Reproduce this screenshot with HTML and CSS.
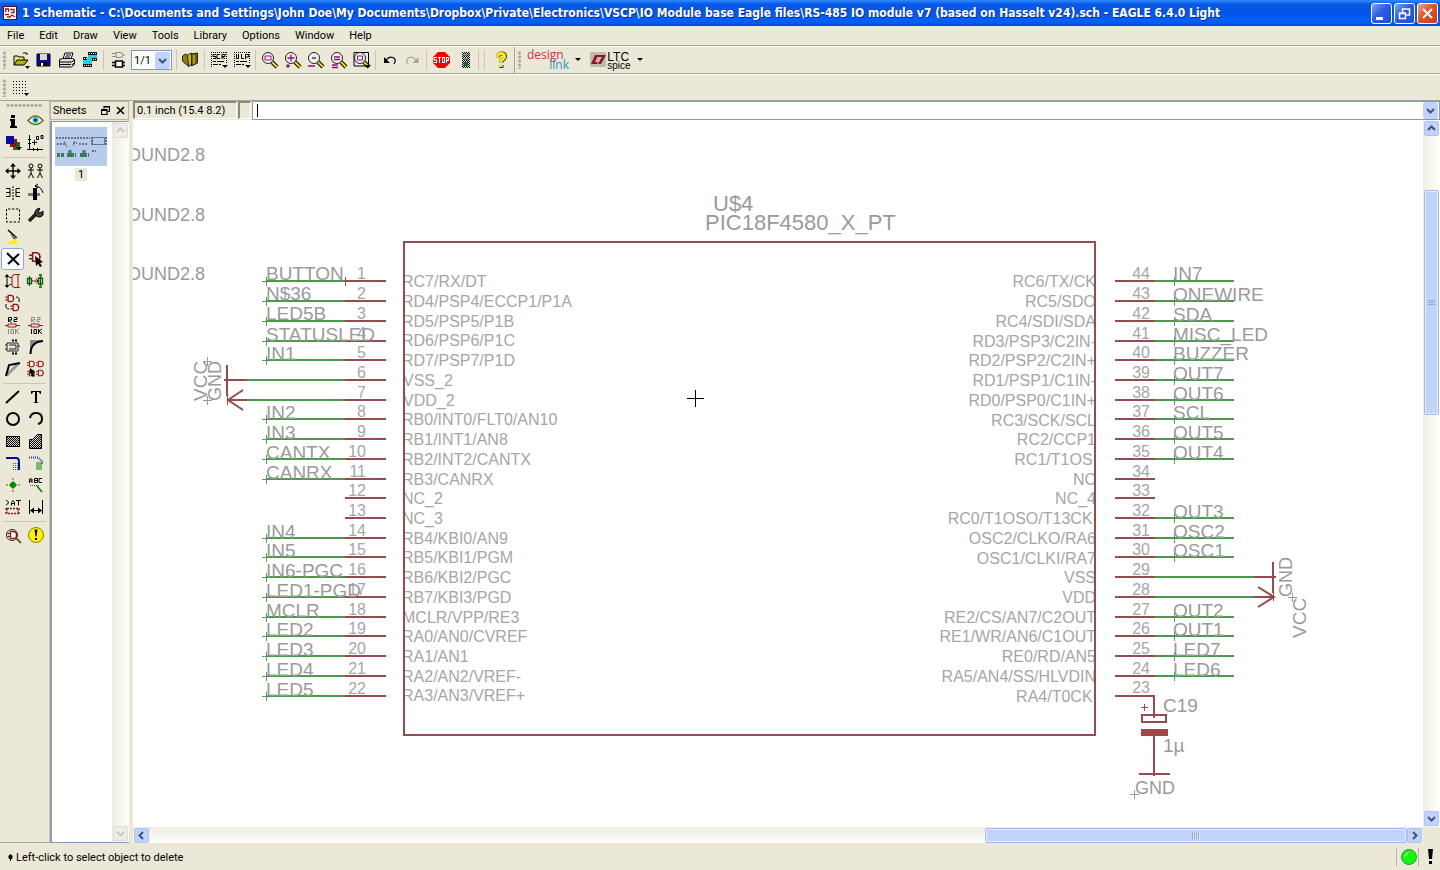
FILE: index.html
```html
<!DOCTYPE html>
<html lang="en">
<head>
<meta charset="utf-8">
<title>1 Schematic - EAGLE 6.4.0 Light</title>
<link rel="stylesheet" href="styles.css">
</head>
<body>
<svg class="defs" width="0" height="0" aria-hidden="true">
  <defs>
    <pattern id="dither" width="2" height="2" patternUnits="userSpaceOnUse"><rect width="2" height="2" fill="#d8d6c8"/><path d="M0 0h1v1h-1zM1 1h1v1h-1z" fill="#000"/></pattern>
    <pattern id="hazard" width="2" height="2" patternUnits="userSpaceOnUse"><rect width="2" height="2" fill="#fff"/><path d="M0 0h1v1h-1zM1 1h1v1h-1z" fill="#e6d800"/></pattern>
    <pattern id="greendots" width="2" height="2" patternUnits="userSpaceOnUse"><path d="M0 0h1v1h-1z" fill="#0a8a0a"/></pattern>
    <symbol id="lens" viewBox="0 0 20 20"><path d="M12 12l5 5" stroke="#000" stroke-width="4"/><path d="M12 12l5 5" stroke="#f2e200" stroke-width="2"/><circle cx="8" cy="8" r="5.5" fill="#f6f2ee" stroke="#222" stroke-width="1"/></symbol>
    <symbol id="gate" viewBox="0 0 10 10"><path d="M3 1.500h3q3 0 3 3.500t-3 3.500h-3zM0 3.500h3M0 6.500h3M9 5h1" fill="none" stroke="#8c1a1a" stroke-width="1.300"/></symbol>
    <symbol id="man" viewBox="0 0 8 16"><circle cx="4" cy="3" r="2" fill="none" stroke="#000"/><path d="M4 5v5M1 7h6M4 10l-2.500 5M4 10l2.500 5" stroke="#000" fill="none"/></symbol>
  </defs>
</svg>
<div class="window">
  <header class="titlebar">
    <svg class="app-icon" width="14" height="14" viewBox="0 0 14 14"><rect x=".5" y=".5" width="13" height="13" fill="#fff" stroke="#5a0c0c"/><path d="M2.500 6v-3h3v3M7 3.500h4v3h-3M2 8.500h4M4 11h3l2-2 3 2" fill="none" stroke="#a01818" stroke-width="1.300"/></svg>
    <h1 class="caption">1 Schematic - C:\Documents and Settings\John Doe\My Documents\Dropbox\Private\Electronics\VSCP\IO Module base Eagle files\RS-485 IO module v7 (based on Hasselt v24).sch - EAGLE 6.4.0 Light</h1>
    <div class="window-buttons">
      <button class="wb" aria-label="Minimize"><svg width="19" height="19"><path d="M4 13h7v3h-7z" fill="#fff"/></svg></button>
      <button class="wb" aria-label="Restore"><svg width="19" height="19"><path d="M7.500 8v-3h7v6h-3M7 5h8" fill="none" stroke="#fff" stroke-width="1.500"/><path d="M4.500 9.500h6v5h-6zM4 9h7" fill="none" stroke="#fff" stroke-width="1.500"/></svg></button>
      <button class="wb close" aria-label="Close"><svg width="19" height="19"><path d="M5 5l9 9M14 5l-9 9" stroke="#fff" stroke-width="2"/></svg></button>
    </div>
  </header>

  <nav class="menubar">
    <button>File</button><button>Edit</button><button>Draw</button><button>View</button><button>Tools</button><button>Library</button><button>Options</button><button>Window</button><button>Help</button>
  </nav>

  <div class="toolbar">
    <span class="grip"></span>
    <button class="tb" aria-label="Open"><svg width="20" height="20"><path d="M3 15v-9h4l1 1h5v3" fill="url(#hazard)" stroke="#000"/><path d="M3 15l3-5h11l-4 5z" fill="#b8ae10" stroke="#000"/><path d="M12 3h4v2" fill="none" stroke="#000"/><path d="M14 16h5l-2.500 3z"/></svg></button>
    <button class="tb" aria-label="Save"><svg width="20" height="20"><path d="M3 4h13v12h-13z" fill="#0a0a96" stroke="#000"/><path d="M6 4h7v6h-7z" fill="#d8d8d8"/><path d="M6 12h7v4h-7z" fill="#000"/><path d="M7 13h2v3h-2z" fill="#fff"/></svg></button>
    <button class="tb" aria-label="Print"><svg width="20" height="20"><path d="M6 9l2-6h8l-2 6" fill="#fff" stroke="#000"/><path d="M9 5h5M8 7h5" stroke="#000"/><path d="M2.500 9.500l3-1h10l2 1v5l-3 2.500h-12z" fill="#ddd" stroke="#000"/><path d="M3 12h12M3 14.500h11M15 12l2-2M15 15l2-2" stroke="#000"/><path d="M10 13h2v1h-2z" fill="#e0d000"/></svg></button>
    <button class="tb" aria-label="Board"><svg width="20" height="20"><path d="M8 4h9v5h-9zM3 8h9v7h-9z" fill="#19d6e0"/><path d="M8 2h9v3h-9zM12 8h5v3h-5zM3 7h4v3h-4zM3 14h9v3h-9z" fill="#111"/><path d="M9 3.500h8M13 9.500h4M4 8.500h3M4 15.500h8" stroke="#fff" stroke-dasharray="1 1"/></svg></button>
    <span class="sep"></span>
    <button class="tb" aria-label="Gate"><svg width="20" height="20"><path d="M8 2.500h4q3 0 3 2.500t-3 2.500h-4zM4 3.500h4M4 6.500h4M15 5h2" fill="none" stroke="#8a8a80"/><path d="M7.500 11h7v6h-7zM4 12.500h3M4 15.500h3M15 12.500h2M15 15.500h2" fill="#fff" stroke="#000" stroke-width="1.500"/></svg></button>
    <label class="sheet-select"><select aria-label="Sheet"><option>1/1</option></select><svg class="drop" width="15" height="17"><path d="M4 7l3.500 3.500 3.500-3.500" fill="none" stroke="#3d567d" stroke-width="2"/></svg></label>
    <span class="sep"></span>
    <button class="tb" aria-label="Library"><svg width="20" height="20"><path d="M1.500 6l3-2 3 2v10l-3-2-3-3z" fill="#8a8200" stroke="#222"/><path d="M6.500 5l4-2v11l-3 3z" fill="#c9c015" stroke="#222"/><path d="M10.500 4l6-1v10l-6 3z" fill="#6b6500" stroke="#222"/><path d="M13 5v9" stroke="#ddd24a"/></svg></button>
    <span class="sep"></span>
    <button class="tb" aria-label="Script"><svg width="20" height="20"><path d="M2 2.500h16M2.500 2v15M17.500 2v12" stroke="#000" stroke-dasharray="1 1"/><path d="M7 4.500h-3v2h3v2h-3M11 4.500h-3v4h3M13 9v-4.500h3v2h-3l3 2.500" fill="none" stroke="#000"/><path d="M4 11.500h3M8 11.500h7M4 14.500h5M10 14.500h2" stroke="#000"/><path d="M13 15h6l-3 3z"/></svg></button>
    <button class="tb" aria-label="User language program"><svg width="20" height="20"><path d="M2 2.500h16M2.500 2v15M17.500 2v12" stroke="#000" stroke-dasharray="1 1"/><path d="M4.500 4v4.500h2v-4.500M9.500 4v4.500h2.500M13.500 9v-4.500h3v2.500h-3" fill="none" stroke="#000"/><path d="M4 11.500h3M8 11.500h7M4 14.500h5M10 14.500h2" stroke="#000"/><path d="M13 15h6l-3 3z"/></svg></button>
    <span class="sep"></span>
    <button class="tb" aria-label="Zoom to fit"><svg width="20" height="20"><use href="#lens"/><path d="M5 6h6v4h-6z" fill="none" stroke="#93107a"/></svg></button>
    <button class="tb" aria-label="Zoom in"><svg width="20" height="20"><use href="#lens"/><path d="M4.500 8h7M8 4.500v7M3 16h4M5 14v4" stroke="#93107a" stroke-width="1.300"/></svg></button>
    <button class="tb" aria-label="Zoom out"><svg width="20" height="20"><use href="#lens"/><path d="M6 8h4M2 16h7" stroke="#93107a" stroke-width="1.300"/></svg></button>
    <button class="tb" aria-label="Redraw"><svg width="20" height="20"><use href="#lens"/><path d="M5 7h6M5 9.500h6M3 15h6M3 17.500h6" stroke="#93107a" stroke-width="1.300"/></svg></button>
    <button class="tb" aria-label="Select area"><svg width="20" height="20"><path d="M2 2.500h14.500v13.500h-14.500z" fill="#eee" stroke="#000"/><use href="#lens"/><path d="M5.500 6h5v4h-5z" fill="none" stroke="#93107a"/><path d="M13 15h6l-3 3z"/></svg></button>
    <span class="sep"></span>
    <button class="tb" aria-label="Undo"><svg width="20" height="20"><path d="M6 10q3-4 7-2.500q4 2 1 6.500" fill="none" stroke="#000" stroke-width="1.200"/><path d="M4 7v6h6z"/></svg></button>
    <button class="tb" aria-label="Redo"><svg width="20" height="20"><path d="M13 10q-3-4-7-2.500q-4 2-1 6.500" fill="none" stroke="#a5a498" stroke-width="1.200"/><path d="M15.500 7v6h-6z" fill="#a5a498"/></svg></button>
    <span class="sep"></span>
    <button class="tb" aria-label="Stop"><svg width="20" height="20"><path d="M7 2h7l5 5v6l-5 5h-7l-5-5v-6z" fill="#f00000"/><path d="M6 7.500h-3v2.500h2.500v2.500h-3M7 7.500h3M8.500 7.500v5.500M11.500 7.500h2v5h-2zM15.500 13v-5.500h2v3h-2" fill="none" stroke="#fff" stroke-width="1.100"/></svg></button>
    <button class="tb" aria-label="Go"><svg width="20" height="20"><path d="M8 2h8v16h-8z" fill="url(#dither)"/><path d="M10 4h3v2h-3zM10 8h3v2h-3z" fill="#777"/><path d="M10 12h4v4h-4z" fill="#14691f"/></svg></button>
    <span class="sep double"></span>
    <button class="tb" aria-label="Help"><svg width="20" height="20"><path d="M7 7.500q0-4 3.500-4t3.500 3q0 2-3.500 4v2M10.500 15v3" fill="none" stroke="#333" stroke-width="4"/><path d="M6.500 7.500q0-4 3.500-4t3.500 3q0 2-3.500 4v2M10 15v2" fill="none" stroke="#ffee00" stroke-width="3"/></svg></button>
    <div class="extra">
      <span class="grip"></span>
      <button class="brand design" aria-label="design link"><span class="dl-a">design</span><span class="dl-b">link</span></button>
      <svg class="caret-down" width="6" height="4"><path d="M0 0h6l-3 3z"/></svg>
      <button class="brand ltc" aria-label="LTC spice"><svg width="16" height="15"><rect width="16" height="15" fill="#bdbab4"/><path d="M1 12l4-9h3l-3 7h3l-1 2zM8 3h8l-5 9h-3l4-7h-5z" fill="#9c1020"/></svg><span class="ltc-text"><b>LTC</b><i>spice</i></span></button>
      <svg class="caret-down" width="6" height="4"><path d="M0 0h6l-3 3z"/></svg>
    </div>
  </div>

  <div class="toolbar params">
    <span class="grip"></span>
    <button class="tb" aria-label="Grid"><svg width="20" height="20"><path d="M2 3.500h14M2 6.500h14M2 9.500h14M2 12.500h14M2 15.500h10" stroke="#000" stroke-dasharray="1 2"/><path d="M13 15h5l-2.500 3z"/></svg></button>
  </div>

  <main class="body">
    <aside class="palette">
      <span class="hgrip"></span>
      <div class="tools">
        <button aria-label="Info"><svg width="20" height="20"><path d="M8 4h4v3h-4zM7 8h5v7h2v2h-7v-2h1v-5h-1z"/></svg></button>
        <button aria-label="Show"><svg width="20" height="20"><path d="M2 9.500q7.500-9 15 0q-7.500 8-15 0z" fill="#fff" stroke="#6b6b10" stroke-width="1.500"/><circle cx="9.500" cy="9" r="3" fill="#18b9dc"/><circle cx="9.500" cy="9" r="1.200"/></svg></button>
        <button aria-label="Display"><svg width="20" height="20"><path d="M3 3h8v8h-8z" fill="#0b0b9c"/><path d="M11 6h3v8h-7v-3h4z" fill="#8c1420"/><path d="M14 9h3v8h-7v-3h4z" fill="#157a15"/><path d="M13 14h6l-3 3z"/></svg></button>
        <button aria-label="Mark"><svg width="20" height="20"><path d="M3.500 2v15M1 16.500h16M6 9.500h5M8.500 7v5" stroke="#000"/><path d="M2 6.500h3M2 10.500h3M7.500 15v3M11.500 15v3" stroke="#000"/><path d="M10.500 3.500h2v3h-2zM15 2.500h2v3h-2z" fill="none" stroke="#000"/></svg></button>
      </div>
      <hr>
      <div class="tools">
        <button aria-label="Move"><svg width="20" height="20"><path d="M10 4v12M4 10h12" stroke="#000" stroke-width="1.400"/><path d="M10 2l-3 3.500h6zM10 18l-3-3.500h6zM2 10l3.500-3v6zM18 10l-3.500-3v6z"/></svg></button>
        <button aria-label="Copy"><svg width="20" height="20"><use href="#man" x="1" y="2" width="8" height="16"/><use href="#man" x="10" y="2" width="8" height="16"/></svg></button>
        <button aria-label="Mirror"><svg width="20" height="20"><path d="M3 5.500h4v8h-4M7 9.500h-4M17 5.500h-4v8h4M13 9.500h4" fill="none" stroke="#000"/><path d="M10 3v14" stroke="#000" stroke-dasharray="2 1"/></svg></button>
        <button aria-label="Rotate"><svg width="20" height="20"><path d="M2 10h12v3h-12z" fill="#777"/><path d="M7 5h4v12h-4z"/><path d="M9 3q6 0 8 7M9 3l3-2M9 3l3 2" fill="none" stroke="#000"/></svg></button>
        <button aria-label="Group"><svg width="20" height="20"><path d="M3.500 4v13h13v-13z" fill="none" stroke="#000" stroke-dasharray="2.500 1.500"/></svg></button>
        <button aria-label="Change"><svg width="20" height="20"><path d="M3 16l7-7" stroke="#222" stroke-width="3.500"/><path d="M9 10q-1-5 4-7l1 1-2 3 2 1 3-2v4q-3 4-8 0z" fill="#444" stroke="#000"/></svg></button>
        <button aria-label="Paste"><svg width="20" height="20"><path d="M5 3l9 8" stroke="#000" stroke-width="1.500"/><path d="M8 7l3 5 3-1z" fill="#777" stroke="#555"/><path d="M14 11v6h-12z" fill="#fff000"/></svg></button>
        <span></span>
        <button class="active" aria-label="Delete"><svg width="20" height="20"><path d="M4 4l12 12M16 5l-11 10" stroke="#000" stroke-width="2"/></svg></button>
        <button aria-label="Add"><svg width="20" height="20"><use href="#gate" x="3" y="2" width="12" height="12"/><path d="M9 7l8 6-3 1 2 3-2 1-2-3-2 2z"/></svg></button>
        <button aria-label="Pinswap"><svg width="20" height="20"><path d="M4 5v10" stroke="#000"/><path d="M4 3l-2.500 3h5zM4 17l-2.500-3h5z"/><path d="M17 3.500h-5q-3 0-3 2.500v8q0 2.500 3 2.500h5M6 6.500h3M6 13.500h3M15 3v14" fill="none" stroke="#8c1a1a"/></svg></button>
        <button aria-label="Replace"><svg width="20" height="20"><path d="M3.500 5v10M1.500 7.500h4v5h-4zM14.500 3v14M12.500 7h4v6h-4z" fill="none" stroke="#08600c" stroke-width="1.300"/><path d="M6 10h6M10 7.500l2 2.500-2 2.500" fill="none" stroke="#6b1020"/><path d="M13 3h3v2h-3zM13 15h3v2h-3z" fill="#169020"/></svg></button>
        <button aria-label="Gateswap"><svg width="20" height="20"><use href="#gate" x="2" y="1" width="10" height="9"/><use href="#gate" x="7" y="10" width="10" height="9"/><path d="M13 4q4 0 3 5M6 16q-4 0-3-5" fill="none" stroke="#000"/></svg></button>
        <span></span>
        <button aria-label="Name"><svg width="20" height="20"><path d="M5.500 7v-4.500h3v2.500h-3l3 2.500M11 2.500h3v2h-3v2h3" fill="none" stroke="#000"/><path d="M2 10.500h3M5 9h8v3h-8zM13 10.500h4" fill="none" stroke="#a01818"/><path d="M5.500 14v5M8 14.500h2.500v4h-2.500zM12.500 14v5M16 14l-3 2 3 3" fill="none" stroke="#888"/></svg></button>
        <button aria-label="Value"><svg width="20" height="20"><path d="M5.500 7v-4.500h3v2.500h-3l3 2.500M11 2.500h3v2h-3v2h3" fill="none" stroke="#888"/><path d="M2 10.500h3M5 9h8v3h-8zM13 10.500h4" fill="none" stroke="#a01818"/><path d="M5.500 14v5M8 14.500h2.500v4h-2.500zM12.500 14v5M16 14l-3 2 3 3" fill="none" stroke="#000"/></svg></button>
        <button aria-label="Smash"><svg width="20" height="20"><path d="M4 6h11v8h-11zM6 8h7v4h-7M2 8h2M2 12h2M15 9h2" fill="none" stroke="#222"/><path d="M9 3.500h6M9 16.500h6" stroke="#000" stroke-width="2" stroke-dasharray="2 1"/></svg></button>
        <button aria-label="Miter"><svg width="20" height="20"><path d="M4 17v-14h13l-9 3-3 5z" fill="#888"/><path d="M4.500 17q0-12 12.500-13" fill="none" stroke="#000" stroke-width="2"/></svg></button>
        <button aria-label="Split"><svg width="20" height="20"><path d="M4 16l12-12" stroke="#999" stroke-width="3"/><path d="M3 17l3-11 11-2" fill="none" stroke="#000" stroke-width="2"/></svg></button>
        <button aria-label="Invoke"><svg width="20" height="20"><use href="#gate" x="1" y="1" width="8" height="8"/><use href="#gate" x="10" y="1" width="8" height="8"/><use href="#gate" x="1" y="10" width="8" height="8"/><use href="#gate" x="10" y="10" width="8" height="8"/><path d="M4 9l5 4-2 1 2 3-2 1-3-4z"/></svg></button>
      </div>
      <hr>
      <div class="tools">
        <button aria-label="Wire"><svg width="20" height="20"><path d="M3 16l13-12" stroke="#000" stroke-width="2"/></svg></button>
        <button aria-label="Text"><svg width="20" height="20"><path d="M5 4h10v3h-1l-1-2h-2v10l2 1h-6l2-1v-10h-2l-1 2h-1z"/></svg></button>
        <button aria-label="Circle"><svg width="20" height="20"><circle cx="10" cy="10" r="6" fill="none" stroke="#000" stroke-width="2"/></svg></button>
        <button aria-label="Arc"><svg width="20" height="20"><path d="M4 9q1-5 6-5q6 0 6 6q0 4-4 5" fill="none" stroke="#000" stroke-width="2"/></svg></button>
        <button aria-label="Rectangle"><svg width="20" height="20"><rect x="3.500" y="5.500" width="13" height="10" fill="url(#dither)" stroke="#000"/></svg></button>
        <button aria-label="Polygon"><svg width="20" height="20"><path d="M3.500 17.500v-9h3l5-5h4v14z" fill="url(#dither)" stroke="#000"/></svg></button>
        <button aria-label="Bus"><svg width="20" height="20"><path d="M3 5h10q3 0 3 4v8" fill="none" stroke="#0a0a96" stroke-width="2"/><path d="M9 9h6v8h-6z" fill="url(#greendots)"/></svg></button>
        <button aria-label="Net"><svg width="20" height="20"><path d="M3 4.500h9l4 4v3" fill="none" stroke="#3434a8" stroke-width="2" stroke-dasharray="1 1"/><path d="M10 10h6M10 12h6M10 14h6M10 16h6" stroke="#0a8a0a"/></svg></button>
        <button aria-label="Junction"><svg width="20" height="20"><path d="M10 3v14M3 10h14" stroke="#0a7a0a" stroke-dasharray="2 1"/><circle cx="10" cy="10" r="3" fill="#078a07"/></svg></button>
        <button aria-label="Label"><svg width="20" height="20"><path d="M3.500 8v-4h2.500v4M3.500 6h2.500M8.500 3.500h3v4h-3zM8 5.500h3M16 3.500h-3v4h3" fill="none" stroke="#000"/><path d="M4 10.500h9" stroke="#0a7a0a" stroke-dasharray="1 1"/><path d="M11 11l5 6" stroke="#0a7a0a" stroke-width="1.500"/></svg></button>
        <button aria-label="Attribute"><svg width="20" height="20"><path d="M3 3l3 2.500-3 2.500M8.500 8.500v-3l1.500-2 1.500 2v3M8.500 6.500h3M13 3.500h5M15.500 3.500v5" fill="none" stroke="#000"/><path d="M4 11.500h11v5h-11zM3 11v2M3 15v2M16 11v2M16 15v2" fill="none" stroke="#8c1a1a" stroke-width="1.300" stroke-dasharray="2 1"/></svg></button>
        <button aria-label="Dimension"><svg width="20" height="20"><path d="M3.500 3v14M16.500 3v14M4 13.500h12" stroke="#000"/><path d="M4 13.500l4-3v6zM16 13.500l-4-3v6z"/></svg></button>
      </div>
      <hr>
      <div class="tools">
        <button aria-label="ERC"><svg width="20" height="20"><path d="M13 13l5 5" stroke="#6a6420" stroke-width="2"/><circle cx="9" cy="10" r="5.500" fill="#fff" stroke="#222"/><use href="#gate" x="2" y="5" width="15" height="10"/></svg></button>
        <button aria-label="Errors"><svg width="20" height="20"><circle cx="10" cy="10" r="7.500" fill="#fff200" stroke="#8a8300"/><path d="M8.500 4.500h3l-1 7h-1zM9 13h2v2h-2z"/></svg></button>
      </div>
    </aside>

    <section class="dock">
      <header class="dock-title"><h2>Sheets</h2>
        <button aria-label="Float"><svg width="9" height="9"><path d="M3 2.500v-2h5.500v5h-2M3 1h6" fill="none" stroke="#000" stroke-width="1.200"/><path d="M.5 3.500h5.500v5h-5.500zM0 4.500h6" fill="none" stroke="#000" stroke-width="1.200"/></svg></button>
        <button aria-label="Close"><svg width="9" height="9"><path d="M1 1l7 7M8 1l-7 7" stroke="#000" stroke-width="1.600"/></svg></button>
      </header>
      <div class="dock-list">
        <figure class="sheet">
          <svg width="52" height="39"><rect width="52" height="39" fill="#b9cbea"/><path d="M1 11h34M2 17h9M18 16h4M24 17h8" stroke="#65758e" stroke-width="2" stroke-dasharray="2 1"/><path d="M9 14l3 6M20 14l-2 5" stroke="#65758e"/><path d="M37.500 10.500h12v7h-12z" fill="none" stroke="#65758e"/><path d="M37 10v8M51 10v9M37 24h4" stroke="#51765f" stroke-width="2" stroke-dasharray="2 1"/><path d="M2 28h7M12 28h9M25 28h9" stroke="#3d7a5a" stroke-width="4" stroke-dasharray="3 1"/><path d="M15 23v7M29 23v7" stroke="#3d7a5a" stroke-width="3"/></svg>
          <figcaption>1</figcaption>
        </figure>
        <div class="vscroll disabled">
          <button aria-label="Up"><svg width="9" height="9"><path d="M1 6l3.500-3.500 3.500 3.500" fill="none" stroke="#c8c7be" stroke-width="2"/></svg></button>
          <button aria-label="Down"><svg width="9" height="9"><path d="M1 3l3.500 3.500 3.500-3.500" fill="none" stroke="#c8c7be" stroke-width="2"/></svg></button>
        </div>
      </div>
    </section>

    <section class="editor">
      <div class="command-row">
        <output class="coords">0.1 inch (15.4 8.2)</output>
        <span class="slot"></span>
        <div class="command">
          <span class="text-caret"></span>
          <input type="text" aria-label="Command">
          <button aria-label="History"><svg width="9" height="9"><path d="M1 3l3.500 3.500 3.500-3.500" fill="none" stroke="#3d567d" stroke-width="2"/></svg></button>
        </div>
      </div>
      <div class="view">
        <svg class="sheet-canvas" role="img" aria-label="Schematic">
          <g transform="translate(-133 -120)">
            <g class="pin-name">
              <text x="402" y="287">RC7/RX/DT</text><text x="402" y="307">RD4/PSP4/ECCP1/P1A</text><text x="402" y="327">RD5/PSP5/P1B</text><text x="402" y="346">RD6/PSP6/P1C</text><text x="402" y="366">RD7/PSP7/P1D</text><text x="403" y="386">VSS_2</text><text x="403" y="406">VDD_2</text><text x="402" y="425">RB0/INT0/FLT0/AN10</text><text x="402" y="445">RB1/INT1/AN8</text><text x="402" y="465">RB2/INT2/CANTX</text><text x="402" y="485">RB3/CANRX</text><text x="402" y="504">NC_2</text><text x="402" y="524">NC_3</text><text x="402" y="544">RB4/KBI0/AN9</text><text x="402" y="563">RB5/KBI1/PGM</text><text x="402" y="583">RB6/KBI2/PGC</text><text x="402" y="603">RB7/KBI3/PGD</text><text x="402" y="623">MCLR/VPP/RE3</text><text x="402" y="642">RA0/AN0/CVREF</text><text x="402" y="662">RA1/AN1</text><text x="402" y="682">RA2/AN2/VREF-</text><text x="402" y="701">RA3/AN3/VREF+</text>
            </g>
            <g class="pin-name end">
              <text x="1096" y="287">RC6/TX/CK</text><text x="1096" y="307">RC5/SDO</text><text x="1096" y="327">RC4/SDI/SDA</text><text x="1096" y="347">RD3/PSP3/C2IN-</text><text x="1096" y="366">RD2/PSP2/C2IN+</text><text x="1096" y="386">RD1/PSP1/C1IN-</text><text x="1096" y="406">RD0/PSP0/C1IN+</text><text x="1096" y="426">RC3/SCK/SCL</text><text x="1096" y="445">RC2/CCP1</text><text x="1097" y="465">RC1/T1OSI</text><text x="1096" y="485">NC</text><text x="1096" y="504">NC_4</text><text x="1097" y="524">RC0/T1OSO/T13CKI</text><text x="1096" y="544">OSC2/CLKO/RA6</text><text x="1096" y="564">OSC1/CLKI/RA7</text><text x="1096" y="583">VSS</text><text x="1096" y="603">VDD</text><text x="1096" y="623">RE2/CS/AN7/C2OUT</text><text x="1096" y="642">RE1/WR/AN6/C1OUT</text><text x="1096" y="662">RE0/RD/AN5</text><text x="1096" y="682">RA5/AN4/SS/HLVDIN</text><text x="1097" y="702">RA4/T0CKI</text>
            </g>
            <g class="pin-name end">
              <text x="366" y="279">1</text><text x="366" y="299">2</text><text x="366" y="319">3</text><text x="366" y="339">4</text><text x="366" y="358">5</text><text x="366" y="378">6</text><text x="366" y="398">7</text><text x="366" y="417">8</text><text x="366" y="437">9</text><text x="366" y="457">10</text><text x="366" y="477">11</text><text x="366" y="496">12</text><text x="366" y="516">13</text><text x="366" y="536">14</text><text x="366" y="555">15</text><text x="366" y="575">16</text><text x="366" y="595">17</text><text x="366" y="615">18</text><text x="366" y="634">19</text><text x="366" y="654">20</text><text x="366" y="674">21</text><text x="366" y="694">22</text>
              <text x="1150" y="279">44</text><text x="1150" y="299">43</text><text x="1150" y="319">42</text><text x="1150" y="339">41</text><text x="1150" y="358">40</text><text x="1150" y="378">39</text><text x="1150" y="398">38</text><text x="1150" y="417">37</text><text x="1150" y="437">36</text><text x="1150" y="457">35</text><text x="1150" y="477">34</text><text x="1150" y="496">33</text><text x="1150" y="516">32</text><text x="1150" y="536">31</text><text x="1150" y="555">30</text><text x="1150" y="575">29</text><text x="1150" y="595">28</text><text x="1150" y="615">27</text><text x="1150" y="634">26</text><text x="1150" y="654">25</text><text x="1150" y="674">24</text><text x="1150" y="693">23</text>
            </g>
            <g class="crosses">
              <path d="M266.500 277v9M266.500 297v9M266.500 317v9M266.500 337v9M266.500 356v9M266.500 415v9M266.500 435v9M266.500 455v9M266.500 475v9M266.500 534v9M266.500 553v9M266.500 573v9M266.500 593v9M266.500 613v9M266.500 632v9M266.500 652v9M266.500 672v9M266.500 692v9M1174.500 277v9M1174.500 297v9M1174.500 317v9M1174.500 337v9M1174.500 356v9M1174.500 376v9M1174.500 396v9M1174.500 415v9M1174.500 435v9M1174.500 455v9M1174.500 514v9M1174.500 534v9M1174.500 553v9M1174.500 613v9M1174.500 632v9M1174.500 652v9M1174.500 672v9"/>
              <path d="M262 281.500h9M262 301.500h9M262 321.500h9M262 341.500h9M262 360.500h9M262 419.500h9M262 439.500h9M262 459.500h9M262 479.500h9M262 538.500h9M262 557.500h9M262 577.500h9M262 597.500h9M262 617.500h9M262 636.500h9M262 656.500h9M262 676.500h9M262 696.500h9"/>
              <path class="gray" d="M203 361.500h9M207.500 357v9M203 400.500h9M207.500 396v9M1288 597.500h9M1292.500 593v9M1130 794.500h9M1134.500 790v9"/>
            </g>
            <path class="net" d="M266 281h79M266 301h79M266 321h79M266 341h79M266 360h79M247 380h98M247 400h98M266 419h79M266 439h79M266 459h79M266 479h79M266 538h79M266 557h79M266 577h79M266 597h79M266 617h79M266 636h79M266 656h79M266 676h79M266 696h79"/>
            <path class="net" d="M1154 281h80M1154 301h80M1154 321h80M1154 341h80M1154 360h80M1154 380h80M1154 400h80M1154 419h80M1154 439h80M1154 459h80M1154 518h80M1154 538h80M1154 557h80M1154 577h100M1154 597h100M1154 617h80M1154 636h80M1154 656h80M1154 676h80"/>
            <path class="part" d="M345 281h41M345 301h41M345 321h41M345 341h41M345 360h41M345 380h41M345 400h41M345 419h41M345 439h41M345 459h41M345 479h41M345 498h41M345 518h41M345 538h41M345 557h41M345 577h41M345 597h41M345 617h41M345 636h41M345 656h41M345 676h41M345 696h41"/>
            <path class="part" d="M1115 281h40M1115 301h40M1115 321h40M1115 341h40M1115 360h40M1115 380h40M1115 400h40M1115 419h40M1115 439h40M1115 459h40M1115 479h40M1115 498h40M1115 518h40M1115 538h40M1115 557h40M1115 577h40M1115 597h40M1115 617h40M1115 636h40M1115 656h40M1115 676h40M1115 696h40"/>
            <path class="part" d="M404 242h691v493h-691zM224 380h23M227 365v31M228 400h19M1254 577h22M1273 562v31M1254 597h20"/>
            <path class="part diagonal" d="M243 390l-15 10 15 10M1258 587l16 10-16 10"/>
            <path class="part" d="M1154 696v22M1142 715h24v7h-24zM1154 736v40M1139 774h31"/>
            <path class="part thin" d="M345.500 277v9M1141 707.500h7M1144.500 704v7M227.500 395v10M1273.500 592v9"/>
            <path class="solid" d="M1141 729h27v7h-27z"/>
            <g class="net-name">
              <text x="266" y="280">BUTTON</text><text x="266" y="300">N$36</text><text x="266" y="320">LED5B</text><text x="266" y="341">STATUSLED</text><text x="266" y="360">IN1</text><text x="266" y="419">IN2</text><text x="266" y="439">IN3</text><text x="266" y="459">CANTX</text><text x="266" y="479">CANRX</text><text x="266" y="538">IN4</text><text x="266" y="557">IN5</text><text x="266" y="577">IN6-PGC</text><text x="266" y="597">LED1-PGD</text><text x="266" y="617">MCLR</text><text x="266" y="636">LED2</text><text x="266" y="656">LED3</text><text x="266" y="676">LED4</text><text x="266" y="696">LED5</text>
              <text x="1173" y="280">IN7</text><text x="1173" y="301">ONEWIRE</text><text x="1173" y="321">SDA</text><text x="1173" y="341">MISC_LED</text><text x="1173" y="360">BUZZER</text><text x="1173" y="380">OUT7</text><text x="1173" y="400">OUT6</text><text x="1173" y="419">SCL</text><text x="1173" y="439">OUT5</text><text x="1173" y="459">OUT4</text><text x="1173" y="518">OUT3</text><text x="1173" y="538">OSC2</text><text x="1173" y="557">OSC1</text><text x="1173" y="617">OUT2</text><text x="1173" y="636">OUT1</text><text x="1173" y="656">LED7</text><text x="1173" y="676">LED6</text>
              <text x="1163" y="712">C19</text><text x="1163" y="752">1µ</text>
              <text transform="translate(207 401) rotate(-90)">VCC</text>
              <text transform="translate(1306 638) rotate(-90)">VCC</text>
            </g>
            <g class="supply-name">
              <text x="1135" y="794">GND</text>
              <text transform="translate(221 401) rotate(-90)">GND</text>
              <text transform="translate(1292 597) rotate(-90)">GND</text>
              <g class="end"><text x="205" y="161">ROUND2.8</text><text x="205" y="221">ROUND2.8</text><text x="205" y="280">ROUND2.8</text></g>
            </g>
            <g class="device-name"><text x="713" y="211">U$4</text><text x="705" y="230">PIC18F4580_X_PT</text></g>
            <path class="cursor" d="M687 398.500h17M695.500 390v17"/>
          </g>
        </svg>
        <div class="vscroll">
          <button aria-label="Scroll up"><svg width="9" height="9"><path d="M1 6l3.500-3.500 3.500 3.500" fill="none" stroke="#3d567d" stroke-width="2"/></svg></button>
          <span class="gap-top"></span><span class="thumb"></span><span class="gap-bottom"></span>
          <button aria-label="Scroll down"><svg width="9" height="9"><path d="M1 3l3.500 3.500 3.500-3.500" fill="none" stroke="#3d567d" stroke-width="2"/></svg></button>
        </div>
      </div>
      <div class="bottom-scroll">
        <div class="hscroll">
          <button aria-label="Scroll left"><svg width="9" height="9"><path d="M6 1l-3.500 3.500 3.500 3.500" fill="none" stroke="#3d567d" stroke-width="2"/></svg></button>
          <span class="gap-left"></span><span class="thumb"></span>
          <button aria-label="Scroll right"><svg width="9" height="9"><path d="M3 1l3.500 3.500-3.500 3.500" fill="none" stroke="#3d567d" stroke-width="2"/></svg></button>
        </div>
      </div>
    </section>
  </main>

  <footer class="status">
    <svg width="5" height="7"><path d="M2.500 0v7M1 1.500h3v3h-3z" stroke="#000" stroke-width="1"/></svg>
    <span class="message">Left-click to select object to delete</span>
    <span class="led-box"><svg width="18" height="18"><circle cx="9" cy="9" r="7.500" fill="#12f412" stroke="#2b9a2b"/><path d="M4 8q1-4 6-4.500l-5 6z" fill="#7dff7d"/></svg></span>
    <svg class="bang" width="7" height="16"><path d="M1 0h5l-1 10h-3zM2 12h3v3h-3z"/></svg>
  </footer>
</div>
</body>
</html>
```
FILE: styles.css
```css
* { box-sizing: border-box; }
body { margin: 0; font-family: Roboto, "DejaVu Sans", sans-serif; font-size: 11px; color: #000; }
button { border: 0; padding: 0; margin: 0; background: none; font: inherit; color: inherit; display: flex; align-items: center; justify-content: center; }
h1, h2, figure { margin: 0; font-size: inherit; font-weight: normal; }
svg { display: block; flex: none; }
.defs { position: absolute; }

.window { display: flex; flex-direction: column; height: 100vh; background: #ebe8d8; overflow: hidden; }

.titlebar { display: flex; align-items: center; height: 26px; flex: none; padding: 0 2px 0 3px; background: linear-gradient(#2f8cff 0, #0a5ae8 4px, #0454e4 12px, #0560fb 20px, #0558ea 24px, #0341c0); }
.caption { flex: 1; min-width: 0; margin-left: 5px; font: bold 12px/20px "DejaVu Sans Condensed", "DejaVu Sans", sans-serif; color: #fff; text-shadow: 1px 1px 0 #0a2f8c; white-space: nowrap; overflow: hidden; }
.window-buttons { display: flex; gap: 2px; flex: none; }
.wb { width: 21px; height: 21px; border: 1px solid #fff; border-radius: 3px; background: linear-gradient(135deg, #7ea4f4, #2a5fe0 45%, #1c4fd2); }
.wb.close { background: linear-gradient(135deg, #f0a58c, #e0512c 45%, #cf3c14); }

.menubar { display: flex; gap: 15px; height: 20px; flex: none; padding-left: 7px; border-bottom: 1px solid #a5a498; }

.toolbar { display: flex; align-items: center; height: 28px; flex: none; border-top: 1px solid #fff; border-bottom: 1px solid #a5a498; }
.toolbar.params { height: 27px; }
.grip { width: 3px; height: 18px; margin: 0 3px; flex: none; background: radial-gradient(circle, #aaa798 1px, transparent 2px) 0 0 / 3px 4px; }
.tb { width: 23px; height: 24px; flex: none; }
.sep { width: 5px; height: 20px; flex: none; background: linear-gradient(#c9c6b5, #c9c6b5) 2px 0 / 1px 20px no-repeat; }
.sep.double { width: 14px; background: linear-gradient(#c9c6b5, #c9c6b5) 3px 0 / 1px 20px no-repeat, linear-gradient(#c9c6b5, #c9c6b5) 9px 0 / 1px 20px no-repeat; }
.sheet-select { display: flex; align-items: center; width: 41px; height: 20px; margin: 0 2px; padding-right: 1px; border: 1px solid #7f9db9; background: #fff; }
.sheet-select select { appearance: none; flex: 1; min-width: 0; height: 18px; border: 0; padding: 0 2px; margin: 0; background: #fff; font: inherit; }
.drop { background: #c1d2fb; border-radius: 2px; }
.extra { display: flex; align-items: center; height: 27px; margin-left: 2px; border-left: 1px solid #a5a498; }
.brand { height: 24px; flex: none; }
.design { display: grid; width: 42px; margin-left: 3px; align-content: center; justify-items: start; justify-content: stretch; font: 12px/10px "Open Sans", sans-serif; }
.dl-a { color: #c8324a; }
.dl-b { justify-self: end; color: #2f93b8; }
.caret-down { margin: 0 8px 0 6px; }
.ltc { gap: 1px; align-items: flex-start; padding-top: 4px; margin-left: 1px; width: 41px; }
.ltc-text { display: flex; flex-direction: column; font-family: "Liberation Sans", sans-serif; text-align: left; }
.ltc-text b { font: 12px/10px "Liberation Sans", sans-serif; }
.ltc-text i { font: 10px/8px "Liberation Sans", sans-serif; }

.body { display: flex; flex: 1; min-height: 0; }
.palette { width: 50px; flex: none; padding: 0 1px; border-right: 1px solid #c9c6b5; border-bottom: 1px solid #a5a498; }
.hgrip { display: block; height: 3px; margin: 3px 5px; background: radial-gradient(circle, #aaa798 1px, transparent 2px) 0 0 / 4px 3px; }
.tools { display: grid; grid-template-columns: 23px 23px; grid-auto-rows: 22px; }
.palette hr { height: 1px; margin: 3px 2px 2px; border: 0; background: #c9c6b5; }
.active { background: #fff; border: 1px solid #8fa5cb; border-radius: 3px; }

.dock { display: flex; flex-direction: column; width: 79px; flex: none; }
.dock-title { display: flex; align-items: center; gap: 6px; height: 19px; flex: none; padding: 0 3px 0 2px; border: 1px solid #b9b6a6; }
.dock-title h2 { flex: 1; }
.dock-list { display: flex; flex: 1; min-height: 0; margin-top: 1px; border: 1px solid #7f9db9; border-left: 2px solid #8e9aa2; background: #fff; }
.sheet { flex: 1; display: flex; flex-direction: column; align-items: center; padding: 5px 5px 5px 3px; }
.sheet figcaption { margin-top: 2px; padding: 0 3px; background: #ebe8d8; line-height: 13px; }

.editor { display: flex; flex-direction: column; flex: 1; min-width: 0; margin-left: 4px; background: #fff; }
.command-row { display: flex; height: 19px; flex: none; background: #ebe8d8; }
.coords, .slot { border: 1px solid #fff; border-top: 2px solid #8b897c; border-left: 2px solid #8b897c; height: 18px; flex: none; }
.coords { display: block; width: 104px; padding-left: 2px; line-height: 16px; white-space: nowrap; }
.slot { width: 13px; margin-left: 1px; }
.command { flex: 1; min-width: 0; display: flex; align-items: center; margin-left: 1px; padding: 0 1px 0 4px; border: 1px solid #7f9db9; background: #fff; }
.text-caret { width: 1px; height: 13px; flex: none; background: #000; }
.command input { flex: 1; min-width: 0; height: 16px; border: 0; padding: 0; outline: 0; background: transparent; font: inherit; }
.command button { width: 15px; height: 17px; flex: none; border-radius: 2px; background: #c1d2fb; }

.view { display: flex; flex: 1; min-height: 0; }
.sheet-canvas { flex: 1 1 0; min-width: 0; height: 100%; overflow: hidden; font-family: "Liberation Sans", Arial, sans-serif; fill: #9a9a9a; background: #fff; shape-rendering: crispEdges; }
.pin-name { font-size: 16px; fill: #a6a6a6; }
.end { text-anchor: end; }
.net-name { font-size: 19px; }
.supply-name { font-size: 18px; }
.device-name { font-size: 22px; }
.net, .part, .crosses, .cursor { fill: none; stroke-width: 2px; }
.net { stroke: #4b9a4b; }
.part { stroke: #964b50; }
.part.thin { stroke-width: 1px; }
.part.diagonal { shape-rendering: auto; }
.solid { fill: #a04848; }
.crosses { stroke: #6f8f6f; stroke-width: 1px; }
.gray { stroke: #9a9a9a; }
.cursor { stroke: #000; stroke-width: 1px; }

.vscroll { display: flex; flex-direction: column; width: 17px; flex: none; padding: 1px 0; background: linear-gradient(90deg, #eeede5, #fefefb); }
.hscroll { display: flex; flex: 1; min-width: 0; height: 16px; padding: 1px 1px 0; background: linear-gradient(#eeede5, #fefefb); }
.bottom-scroll { display: flex; flex: none; padding-right: 17px; background: #ebe8d8; }
.vscroll button, .hscroll button { width: 15px; height: 15px; flex: none; border: 1px solid #b0c3f0; border-radius: 2px; background: #c1d2fb; }
.vscroll button { align-self: center; }
.thumb { border: 1px solid #a3b9ee; border-radius: 2px; box-shadow: inset 0 0 0 1px #e4ecff; }
.vscroll .thumb { flex: 223 0 0; width: 15px; align-self: center; background: linear-gradient(#8fa8e8, #8fa8e8) 50% 50% / 7px 1px no-repeat, linear-gradient(#8fa8e8, #8fa8e8) 50% calc(50% + 2px) / 7px 1px no-repeat, linear-gradient(#8fa8e8, #8fa8e8) 50% calc(50% - 2px) / 7px 1px no-repeat, #c1d2fb; }
.hscroll .thumb { flex: 420 0 0; height: 15px; background: repeating-linear-gradient(90deg, #8fa8e8 0 1px, #e4ecff 1px 2px) 50% 50% / 8px 7px no-repeat, #c1d2fb; }
.gap-top { flex: 54 0 0; }
.gap-bottom { flex: 397 0 0; }
.gap-left { flex: 836 0 0; }
.vscroll.disabled { justify-content: space-between; }
.vscroll.disabled button { background: #efede3; border-color: #dddbd0; }

.status { display: flex; align-items: center; height: 27px; flex: none; padding: 1px 6px 0 8px; }
.message { flex: 1; margin-left: 3px; }
.led-box { padding-left: 3px; border-left: 1px solid #b9b6a6; border-right: 1px solid #b9b6a6; }
.bang { margin-left: 8px; }
```
